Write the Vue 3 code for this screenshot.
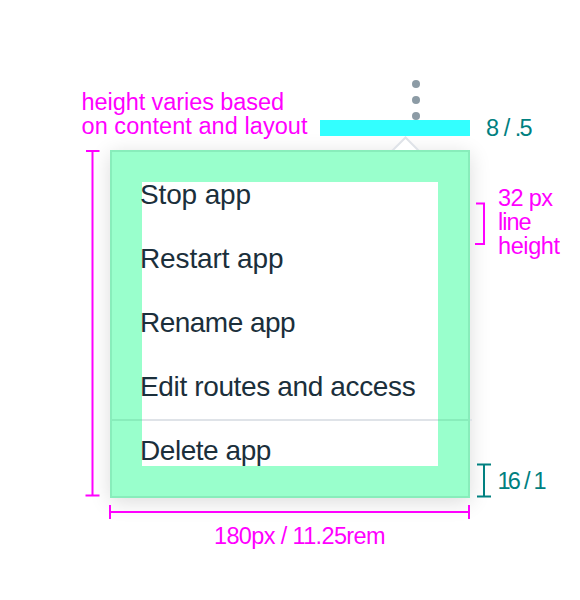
<script setup>
const items = [
  { label: 'Stop app', spacing: -0.15 },
  { label: 'Restart app', spacing: -0.12 },
  { label: 'Rename app', spacing: -0.52 },
  { label: 'Edit routes and access', spacing: -0.36 },
  { label: 'Delete app', spacing: -0.45 },
]
const notes = [
  { text: 'height varies based', x: 81.5, y: 110, width: 202.5 },
  { text: 'on content and layout', x: 81.5, y: 134, width: 226 },
  { text: '32 px', x: 498, y: 206, width: 55 },
  { text: 'line', x: 498, y: 230, width: 33.5 },
  { text: 'height', x: 498, y: 254, width: 62 },
  { text: '180px / 11.25rem', x: 214, y: 544, width: 171.5 },
  { text: '8 / .5', x: 486, y: 136, width: 46.5, teal: true },
  { text: '16 / 1', x: 497.5, y: 489, width: 49, teal: true },
]
</script>

<template>
  <main class="spec">
    <ul class="menu">
      <li v-for="item in items" :key="item.label">
        <span :style="{ letterSpacing: item.spacing + 'px' }">{{ item.label }}</span>
      </li>
    </ul>
    <svg class="annotations" width="580" height="600" viewBox="0 0 580 600">
      <g fill="#8c9ba5">
        <circle cx="416" cy="84" r="4" />
        <circle cx="416" cy="100" r="4" />
        <circle cx="416" cy="116" r="4" />
      </g>
      <path d="M320 120h150v16H320z" fill="#33ffff" />
      <path d="M392 151L405.5 137.5L419 151" fill="#fff" stroke="#dfe3e8" stroke-width="2" />
      <path d="M110 150H470V498H110ZM142 182V466H438V182Z" fill="#99ffcc" fill-rule="evenodd" />
      <path d="M111 151H469V497H111Z" class="edge" />
      <path d="M112 420H142M438 420H469" class="edge" />
      <path d="M142 420H438M470 420H472" class="divider" />
      <g class="magenta">
        <path d="M86 151H99.5M92.5 151V495.5M85.5 495.5H99.5" />
        <path d="M110 505V519M110 512H469M469 505V519" />
        <path d="M476 203.5H484V244H475" />
      </g>
      <path d="M477 464.5H491M484 464.5V496.5M477 496.5H491" class="teal" />
      <text
        v-for="note in notes"
        :key="note.text"
        :x="note.x"
        :y="note.y"
        :textLength="note.width"
        :class="{ tealText: note.teal }"
      >{{ note.text }}</text>
    </svg>
  </main>
</template>

<style>
body {
  background: #fff;
}
</style>

<style scoped>
.spec {
  position: relative;
  box-sizing: border-box;
  width: 580px;
  height: 600px;
  padding: 150px 110px 102px;
  overflow: hidden;
  font-family: "Liberation Sans", Arial, sans-serif;
}
.menu {
  box-sizing: border-box;
  display: flex;
  flex-direction: column;
  width: 360px;
  height: 348px;
  margin: 0;
  padding: 13px 0 0 30px;
  list-style: none;
  background: #fff;
  box-shadow: 0 4px 20px rgba(0, 0, 0, 0.14);
}
li {
  position: relative;
  z-index: 1;
  height: 64px;
  line-height: 64px;
  font-size: 28px;
  color: #1b2f3b;
  white-space: pre;
}
.annotations {
  position: absolute;
  inset: 0;
}
.edge {
  fill: none;
  stroke: #88edbb;
  stroke-width: 2;
}
.divider {
  stroke: #dfe3e8;
  stroke-width: 2;
}
.magenta {
  fill: none;
  stroke: #ff00ff;
  stroke-width: 2;
}
.teal {
  fill: none;
  stroke: #008080;
  stroke-width: 2;
}
text {
  font-size: 23.5px;
  fill: #ff00ff;
}
.tealText {
  fill: #008080;
  word-spacing: 2px;
}
</style>
